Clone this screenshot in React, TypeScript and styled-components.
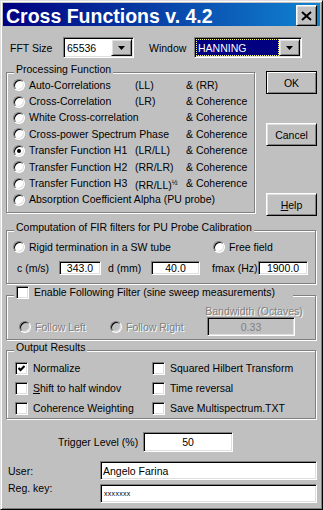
import React from "react";
import styled, { createGlobalStyle, css } from "styled-components";

const GlobalStyle = createGlobalStyle`
  *, *::before, *::after { box-sizing: border-box; }
  html, body { margin: 0; padding: 0; background: #c0c0c0; }
  body {
    font-family: "Liberation Sans", Arial, sans-serif;
    font-size: 10.5px;
    color: #000;
  }
`;

const raised = css`
  background: #c0c0c0;
  border: 1px solid;
  border-color: #fff #000 #000 #fff;
  box-shadow: inset 1px 1px 0 #dfdfdf, inset -1px -1px 0 #808080;
`;

const sunken = css`
  border: 1px solid;
  border-color: #808080 #fff #fff #808080;
  box-shadow: inset 1px 1px 0 #000, inset -1px -1px 0 #dfdfdf;
`;

const Window = styled.div`
  width: 323px;
  height: 510px;
  background: #c0c0c0;
  border: 1px solid;
  border-color: #dfdfdf #000 #000 #dfdfdf;
  box-shadow: inset 1px 1px 0 #fff, inset -1px -1px 0 #808080;
  padding: 2px;
  display: flex;
  flex-direction: column;
  overflow: hidden;
`;

const TitleBar = styled.div`
  flex: none;
  height: 23px;
  display: flex;
  align-items: flex-start;
  justify-content: space-between;
  padding: 0 3px;
  background: linear-gradient(to right, #000080, #1084d0);
`;

const TitleText = styled.span`
  color: #fff;
  font-weight: bold;
  font-size: 19.5px;
  line-height: 27px;
  height: 23px;
  white-space: nowrap;
`;

const CloseButton = styled.div`
  ${raised};
  width: 21px;
  height: 21px;
  margin-top: 2px;
  display: flex;
  align-items: center;
  justify-content: center;
`;

const Body = styled.div`
  flex: 1;
  display: flex;
  flex-direction: column;
  padding: 0 3px;
`;

const TopRow = styled.div`
  display: flex;
  align-items: center;
  height: 21px;
  margin-top: 11px;
  padding-left: 4px;
`;

const RowLabel = styled.span<{ $w: number; $pl?: number; $top?: boolean }>`
  flex: none;
  width: ${(p) => p.$w}px;
  padding-left: ${(p) => p.$pl ?? 0}px;
  white-space: nowrap;
  ${(p) =>
    p.$top &&
    css`
      align-self: flex-start;
      line-height: 13px;
      margin-top: -2px;
    `}
`;

const Combo = styled.div<{ $w: number }>`
  ${sunken};
  flex: none;
  width: ${(p) => p.$w}px;
  height: 21px;
  background: #fff;
  padding: 1px;
  display: flex;
`;

const ComboText = styled.div<{ $selected?: boolean }>`
  flex: 1;
  display: flex;
  align-items: center;
  padding-left: 2px;
  ${(p) =>
    p.$selected &&
    css`
      background: #000080;
      color: #fff;
      outline: 1px dotted #ffff80;
      outline-offset: -1px;
    `}
`;

const ComboButton = styled.div`
  ${raised};
  flex: none;
  width: 21px;
  display: flex;
  align-items: center;
  justify-content: center;
`;

const MainRow = styled.div`
  display: flex;
  align-items: flex-start;
  margin-top: 13px;
`;

const Group = styled.div<{ $w?: number; $h: number; $mt: number }>`
  position: relative;
  flex: none;
  width: ${(p) => (p.$w ? `${p.$w}px` : "calc(100% - 1px)")};
  height: ${(p) => p.$h}px;
  margin-top: ${(p) => p.$mt}px;
  border: 1px solid #808080;
  box-shadow: inset 1px 1px 0 #fff, 1px 1px 0 #fff;
`;

const Caption = styled.div<{ $w?: number }>`
  position: absolute;
  top: -10px;
  left: 7px;
  padding: 0 2px;
  background: #c0c0c0;
  line-height: 13px;
  white-space: nowrap;
  display: flex;
  align-items: center;
  ${(p) => p.$w && `width: ${p.$w}px;`}
`;

const OptionGrid = styled.div`
  display: grid;
  grid-template-columns: 16px 106px 51px 1fr;
  grid-auto-rows: 16.4px;
  align-items: center;
  padding: 4px 0 0 6px;
  line-height: 13px;
  white-space: nowrap;
`;

const Cell = styled.span<{ $span?: number }>`
  grid-column: span ${(p) => p.$span ?? 1};
`;

const Sup = styled.span`
  font-size: 7px;
  vertical-align: 4px;
`;

const RadioDot = styled.span<{ $checked?: boolean; $disabled?: boolean }>`
  position: relative;
  flex: none;
  display: block;
  width: 12px;
  height: 12px;
  border-radius: 50%;
  background: ${(p) => (p.$disabled ? "#c0c0c0" : "#fff")};
  border: 1px solid;
  border-color: #808080 #fff #fff #808080;
  box-shadow: inset 1px 1px 0 #000, inset -1px -1px 0 #dfdfdf;
  &::after {
    content: "";
    display: ${(p) => (p.$checked ? "block" : "none")};
    position: absolute;
    left: 3px;
    top: 3px;
    width: 4px;
    height: 4px;
    border-radius: 50%;
    background: #000;
  }
`;

const CheckBox = styled.span`
  ${sunken};
  flex: none;
  width: 13px;
  height: 13px;
  background: #fff;
  display: flex;
  align-items: center;
  justify-content: center;
`;

const ButtonCol = styled.div`
  flex: none;
  width: 51px;
  margin-left: 11px;
  display: flex;
  flex-direction: column;
`;

const Button = styled.div<{ $default?: boolean; $mt: number }>`
  ${raised};
  height: 23px;
  margin-top: ${(p) => p.$mt}px;
  display: flex;
  align-items: center;
  justify-content: center;
  ${(p) =>
    p.$default &&
    css`
      border-color: #000;
      box-shadow: inset 1px 1px 0 #fff, inset -1px -1px 0 #808080;
    `}
`;

const Option = styled.div<{ $w?: number; $gap?: number; $disabled?: boolean }>`
  flex: none;
  display: flex;
  align-items: center;
  gap: ${(p) => p.$gap ?? 4}px;
  white-space: nowrap;
  ${(p) => p.$w && `width: ${p.$w}px;`}
  ${(p) =>
    p.$disabled &&
    css`
      color: #808080;
      text-shadow: 1px 1px 0 #fff;
    `}
`;

const FirBody = styled.div`
  padding: 8px 0 0 6px;
  display: flex;
  flex-direction: column;
`;

const FlexRow = styled.div<{ $h: number; $mt?: number; $pl?: number }>`
  display: flex;
  align-items: center;
  height: ${(p) => p.$h}px;
  margin-top: ${(p) => p.$mt ?? 0}px;
  padding-left: ${(p) => p.$pl ?? 0}px;
  white-space: nowrap;
`;

const TextBox = styled.div<{
  $w: number;
  $h: number;
  $center?: boolean;
  $disabled?: boolean;
  $mt?: number;
}>`
  ${sunken};
  flex: none;
  width: ${(p) => p.$w}px;
  height: ${(p) => p.$h}px;
  margin-top: ${(p) => p.$mt ?? 0}px;
  background: ${(p) => (p.$disabled ? "#c0c0c0" : "#fff")};
  color: ${(p) => (p.$disabled ? "#808080" : "#000")};
  display: flex;
  align-items: center;
  justify-content: ${(p) => (p.$center ? "center" : "flex-start")};
  padding: 0 2px;
  overflow: hidden;
  white-space: nowrap;
`;

const FollowBody = styled.div`
  display: flex;
  align-items: flex-end;
  padding: 10px 0 0 12px;
`;

const BandCol = styled.div`
  flex: none;
  width: 88px;
  display: flex;
  flex-direction: column;
  align-items: center;
`;

const DisabledLabel = styled.span`
  line-height: 10px;
  height: 10px;
  margin-left: 6px;
  white-space: nowrap;
  color: #808080;
  text-shadow: 1px 1px 0 #fff;
`;

const CheckGrid = styled.div`
  display: grid;
  grid-template-columns: 137px 1fr;
  grid-auto-rows: 18px;
  row-gap: 2px;
  align-items: center;
  padding: 8px 0 0 8px;
`;

const Password = styled.span`
  font-size: 7px;
  letter-spacing: 0.3px;
  padding-left: 1px;
`;

const Underline = styled.span`
  text-decoration: underline;
`;

const DownArrow = () => (
  <svg width="7" height="4" viewBox="0 0 7 4">
    <polygon points="0,0 7,0 3.5,4" fill="#000" />
  </svg>
);

const CheckMark = () => (
  <svg width="7" height="7" viewBox="0 0 7 7">
    <polyline
      points="0.5,3 2.5,5 6.5,1"
      fill="none"
      stroke="#000"
      strokeWidth="2"
    />
  </svg>
);

const CloseX = () => (
  <svg width="11" height="10" viewBox="0 0 11 10">
    <path d="M1 1 L10 9 M10 1 L1 9" stroke="#000" strokeWidth="2" />
  </svg>
);

type Proc = { a: string; b?: React.ReactNode; c?: string; span?: number; checked?: boolean };

const processing: Proc[] = [
  { a: "Auto-Correlations", b: "(LL)", c: "& (RR)" },
  { a: "Cross-Correlation", b: "(LR)", c: "& Coherence" },
  { a: "White Cross-correlation", span: 2, c: "& Coherence" },
  { a: "Cross-power Spectrum Phase", span: 2, c: "& Coherence" },
  { a: "Transfer Function H1", b: "(LR/LL)", c: "& Coherence", checked: true },
  { a: "Transfer Function H2", b: "(RR/LR)", c: "& Coherence" },
  {
    a: "Transfer Function H3",
    b: (
      <>
        (RR/LL)<Sup>½</Sup>
      </>
    ),
    c: "& Coherence",
  },
  { a: "Absorption Coefficient Alpha (PU probe)", span: 3 },
];

const outputs: { label: React.ReactNode; checked?: boolean }[] = [
  { label: "Normalize", checked: true },
  { label: "Squared Hilbert Transform" },
  {
    label: (
      <span>
        <Underline>S</Underline>hift to half windov
      </span>
    ),
  },
  { label: "Time reversal" },
  { label: "Coherence Weighting" },
  { label: "Save Multispectrum.TXT" },
];

export default function App() {
  return (
    <>
      <GlobalStyle />
      <Window>
        <TitleBar>
          <TitleText>Cross Functions v. 4.2</TitleText>
          <CloseButton>
            <CloseX />
          </CloseButton>
        </TitleBar>
        <Body>
          <TopRow>
            <RowLabel $w={53}>FFT Size</RowLabel>
            <Combo $w={71}>
              <ComboText>65536</ComboText>
              <ComboButton>
                <DownArrow />
              </ComboButton>
            </Combo>
            <RowLabel $w={60} $pl={15}>
              Window
            </RowLabel>
            <Combo $w={108}>
              <ComboText $selected>HANNING</ComboText>
              <ComboButton>
                <DownArrow />
              </ComboButton>
            </Combo>
          </TopRow>

          <MainRow>
            <Group $w={249} $h={141} $mt={1}>
              <Caption>Processing Function</Caption>
              <OptionGrid>
                {processing.map((p, i) => (
                  <React.Fragment key={i}>
                    <RadioDot $checked={p.checked} />
                    <Cell $span={p.span}>{p.a}</Cell>
                    {p.b !== undefined && <Cell>{p.b}</Cell>}
                    {p.c !== undefined && <Cell>{p.c}</Cell>}
                  </React.Fragment>
                ))}
              </OptionGrid>
            </Group>
            <ButtonCol>
              <Button $default $mt={0}>
                OK
              </Button>
              <Button $mt={29}>Cancel</Button>
              <Button $mt={47}>
                <span>
                  <Underline>H</Underline>elp
                </span>
              </Button>
            </ButtonCol>
          </MainRow>

          <Group $h={54} $mt={14}>
            <Caption>Computation of FIR filters for PU Probe Calibration</Caption>
            <FirBody>
              <FlexRow $h={16}>
                <Option $w={200}>
                  <RadioDot />
                  Rigid termination in a SW tube
                </Option>
                <Option>
                  <RadioDot />
                  Free field
                </Option>
              </FlexRow>
              <FlexRow $h={14} $mt={6} $pl={4}>
                <RowLabel $w={42}>c (m/s)</RowLabel>
                <TextBox $w={42} $h={14} $center>
                  343.0
                </TextBox>
                <RowLabel $w={50} $pl={7}>
                  d (mm)
                </RowLabel>
                <TextBox $w={49} $h={14} $center>
                  40.0
                </TextBox>
                <RowLabel $w={58} $pl={12}>
                  fmax (Hz)
                </RowLabel>
                <TextBox $w={50} $h={14} $center>
                  1900.0
                </TextBox>
              </FlexRow>
            </FirBody>
          </Group>

          <Group $h={45} $mt={11}>
            <Caption $w={279}>
              <Option $gap={5}>
                <CheckBox />
                Enable Following Filter (sine sweep measurements)
              </Option>
            </Caption>
            <FollowBody>
              <FlexRow $h={19}>
                <Option $w={91} $disabled>
                  <RadioDot $disabled />
                  Follow Left
                </Option>
                <Option $w={97} $disabled>
                  <RadioDot $disabled />
                  Follow Right
                </Option>
              </FlexRow>
              <BandCol>
                <DisabledLabel>Bandwidth (Octaves)</DisabledLabel>
                <TextBox $w={88} $h={19} $center $disabled $mt={1}>
                  0.33
                </TextBox>
              </BandCol>
            </FollowBody>
          </Group>

          <Group $h={69} $mt={10}>
            <Caption>Output Results</Caption>
            <CheckGrid>
              {outputs.map((o, i) => (
                <Option key={i} $gap={5}>
                  <CheckBox>{o.checked && <CheckMark />}</CheckBox>
                  {o.label}
                </Option>
              ))}
            </CheckGrid>
          </Group>

          <FlexRow $h={20} $mt={13} $pl={52}>
            <RowLabel $w={85}>Trigger Level (%)</RowLabel>
            <TextBox $w={90} $h={20} $center>
              50
            </TextBox>
          </FlexRow>
          <FlexRow $h={19} $mt={9} $pl={2}>
            <RowLabel $w={92}>User:</RowLabel>
            <TextBox $w={217} $h={19}>
              Angelo Farina
            </TextBox>
          </FlexRow>
          <FlexRow $h={19} $mt={4} $pl={2}>
            <RowLabel $w={92} $top>
              Reg. key:
            </RowLabel>
            <TextBox $w={217} $h={19}>
              <Password>xxxxxxx</Password>
            </TextBox>
          </FlexRow>
        </Body>
      </Window>
    </>
  );
}
